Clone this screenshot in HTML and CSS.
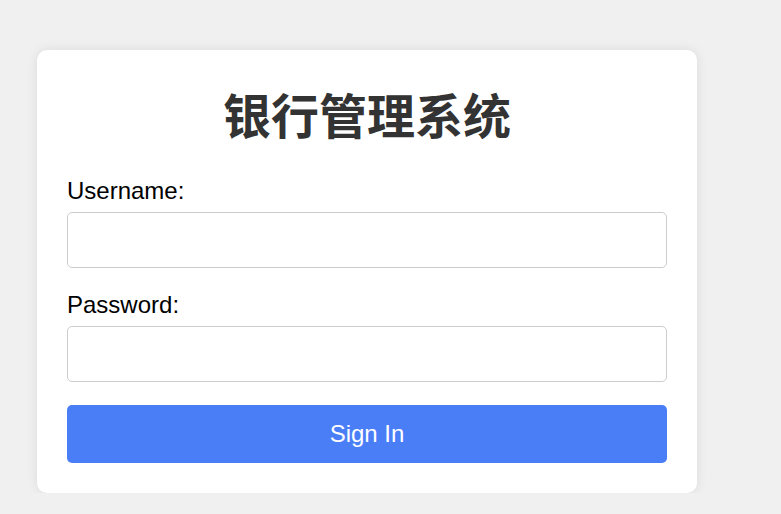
FILE: index.html
```html
<!DOCTYPE html>
<html lang="zh">
<head>
<meta charset="utf-8">
<title>银行管理系统</title>
<link rel="stylesheet" href="styles.css">
</head>
<body>
<div class="page">
  <div class="card">
    <h1 class="title">银行管理系统</h1>
    <form class="form">
      <label class="label" for="username">Username:</label>
      <input class="input" id="username" type="text">
      <label class="label" for="password">Password:</label>
      <input class="input" id="password" type="password">
      <button class="btn" type="button">Sign In</button>
    </form>
  </div>
</div>
</body>
</html>
```
FILE: styles.css
```css
html, body {
  margin: 0;
  padding: 0;
  background: #f0f0f0;
  font-family: "Liberation Sans", Arial, "Noto Sans CJK SC", sans-serif;
}
.page {
  padding: 50px 0 0 37px;
}
.card {
  width: 660px;
  box-sizing: border-box;
  padding: 30px;
  background: #ffffff;
  border-radius: 10px;
  box-shadow: 0 0 12px rgba(0, 0, 0, 0.09);
}
.title {
  margin: 0 0 30px;
  font-family: "Noto Sans CJK SC", sans-serif;
  font-size: 48px;
  font-weight: 700;
  line-height: 67px;
  color: #333333;
  text-align: center;
}
.form {
  display: flex;
  flex-direction: column;
}
.label {
  display: block;
  font-size: 24px;
  line-height: 27.6px;
  color: #000000;
  margin-bottom: 7.5px;
}
.input {
  display: block;
  width: 600px;
  height: 56px;
  box-sizing: border-box;
  border: 1px solid #cccccc;
  border-radius: 5px;
  margin: 0 0 23px;
  padding: 0 12px;
  font-size: 24px;
  background: #ffffff;
}
.btn {
  display: block;
  width: 600px;
  height: 58px;
  border: none;
  border-radius: 5px;
  background: #4a7ef7;
  color: #ffffff;
  font-family: "Liberation Sans", Arial, sans-serif;
  font-size: 24px;
  cursor: pointer;
}
```
